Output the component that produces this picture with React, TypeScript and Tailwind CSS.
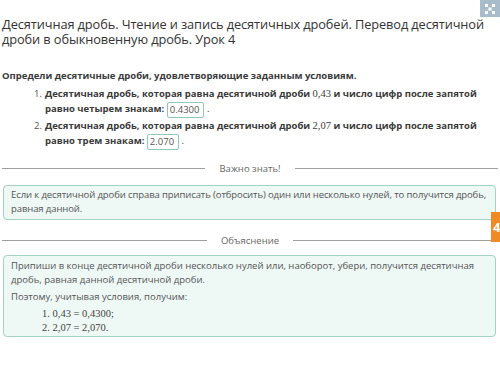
import React from 'react';

const serif = { fontFamily: '"Liberation Serif", "Times New Roman", serif' };

const Divider: React.FC<{ label: string }> = ({ label }) => (
    <div className="flex items-center gap-[14px] px-[2px] h-[13px]">
        <div className="flex-1 h-px bg-[#a0a0a0]" />
        <span className="text-[9.5px] leading-[13px] text-[#666]">{label}</span>
        <div className="flex-1 h-px bg-[#a0a0a0]" />
    </div>
);

const Answer: React.FC<{ value: string }> = ({ value }) => (
    <span className="inline-block align-middle border border-[#8fcab9] rounded-[2px] pl-[2px] pr-[4px] h-[16px] leading-[14px] text-[9.5px] font-normal text-[#555] bg-white">
        {value}
    </span>
);

export default function App() {
    return (
        <div className="relative w-[500px] h-[389px] bg-white overflow-hidden text-[#3a3a3a]" style={{ fontFamily: '"Open Sans", "Noto Sans", sans-serif' }}>
            {/* top-right icon */}
            <div className="absolute right-0 top-0 w-[20px] h-[17px] bg-[#a9bccb] flex items-center justify-center">
                <svg width="10" height="10" viewBox="0 0 10 10" fill="white">
                    <rect x="0" y="0" width="3" height="3" />
                    <rect x="7" y="0" width="3" height="3" />
                    <rect x="3.5" y="3.5" width="3" height="3" />
                    <rect x="0" y="7" width="3" height="3" />
                    <rect x="7" y="7" width="3" height="3" />
                </svg>
            </div>
            {/* orange side tab */}
            <div className="absolute right-0 top-[212px] w-[9px] h-[30px] bg-[#f08a24] overflow-hidden">
                <span className="block text-white text-[13px] font-bold leading-[30px] ml-[2px]">4</span>
            </div>

            <h1 className="pt-[17px] pl-[2px] pr-0 text-[12.8px] leading-[15px] tracking-[-0.1px] text-[#333]">
                Десятичная дробь. Чтение и запись десятичных дробей. Перевод десятичной дроби в обыкновенную дробь. Урок 4
            </h1>

            <div className="mt-[22px] pl-[2px] text-[9.5px] leading-[14px] font-bold">
                Определи десятичные дроби, удовлетворяющие заданным условиям.
            </div>

            <ol className="mt-[3px] pl-[34px] text-[9.5px] font-bold leading-[15.3px]">
                <li className="flex">
                    <span className="w-[11px] shrink-0 font-normal text-[#555]">1.</span>
                    <span>
                        Десятичная дробь, которая равна десятичной дроби <span className="font-normal text-[10.5px]" style={serif}>0,43</span> и число цифр после запятой
                        <br />
                        равно четырем знакам: <Answer value="0.4300" /> <span className="font-normal">.</span>
                    </span>
                </li>
                <li className="flex">
                    <span className="w-[11px] shrink-0 font-normal text-[#555]">2.</span>
                    <span>
                        Десятичная дробь, которая равна десятичной дроби <span className="font-normal text-[10.5px]" style={serif}>2,07</span> и число цифр после запятой
                        <br />
                        равно трем знакам: <Answer value="2.070" /> <span className="font-normal">.</span>
                    </span>
                </li>
            </ol>

            <div className="mt-[12px]">
                <Divider label="Важно знать!" />
            </div>

            <div className="mt-[10px] mx-[3px] w-[493px] border border-[#a3d2c6] rounded-[4px] bg-[#eef8f5] pl-[7px] pr-[2px] pt-[2px] pb-[3px] text-[9.5px] leading-[14px] tracking-[-0.1px] text-[#555]">
                Если к десятичной дроби справа приписать (отбросить) один или несколько нулей, то получится дробь, равная данной.
            </div>

            <div className="mt-[14px]">
                <Divider label="Объяснение" />
            </div>

            <div className="mt-[8px] mx-[3px] w-[493px] border border-[#a3d2c6] rounded-[4px] bg-[#eef8f5] px-[7px] pt-[3px] pb-[1px] text-[9.5px] leading-[14px] text-[#555]">
                <p>Припиши в конце десятичной дроби несколько нулей или, наоборот, убери, получится десятичная дробь, равная данной десятичной дроби.</p>
                <p className="mt-[3px]">Поэтому, учитывая условия, получим:</p>
                <div className="mt-[3px] pl-[31px] text-[10.5px] text-[#444]" style={serif}>
                    <div>1. 0,43 = 0,4300;</div>
                    <div>2. 2,07 = 2,070.</div>
                </div>
            </div>
        </div>
    );
}
